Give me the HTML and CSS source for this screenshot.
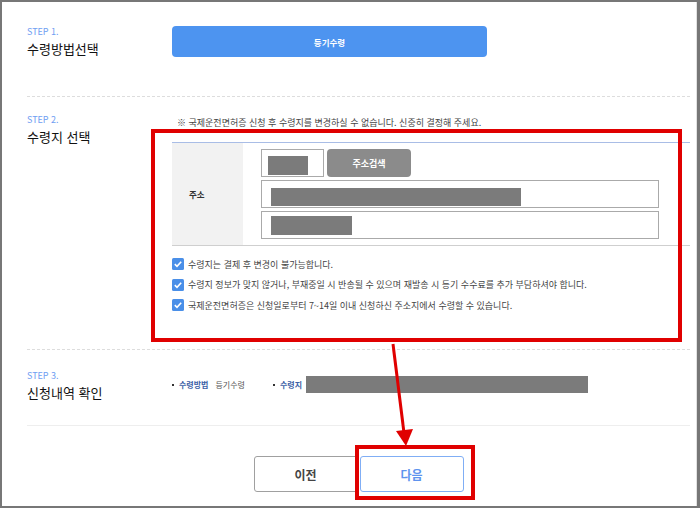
FILE: index.html
```html
<!DOCTYPE html>
<html lang="ko">
<head>
  <meta charset="utf-8">
  <title>수령지 선택</title>
  <link rel="stylesheet" href="styles.css">
</head>
<body>

  <div class="frame">
    <div class="page">

      <div class="step step1">
        <div class="step_head">
          <p class="step_no">STEP 1.</p>
          <h2 class="step_title">수령방법선택</h2>
        </div>
        <div class="step_body">
          <button class="btn_method">등기수령</button>
        </div>
      </div>

      <div class="step step2">
        <div class="step_head">
          <p class="step_no">STEP 2.</p>
          <h2 class="step_title">수령지 선택</h2>
        </div>
        <div class="step_body">
          <p class="notice">※ 국제운전면허증 신청 후 수령지를 변경하실 수 없습니다. 신중히 결정해 주세요.</p>

          <div class="addr_table">
            <div class="addr_label">주소</div>
            <div class="addr_fields">
              <div class="addr_row">
                <div class="field field_zip"><span class="mask mask_zip"></span></div>
                <button class="btn_search">주소검색</button>
              </div>
              <div class="field field_wide"><span class="mask mask_addr1"></span></div>
              <div class="field field_wide"><span class="mask mask_addr2"></span></div>
            </div>
          </div>

          <ul class="agree_list">
            <li>
              <svg class="check" width="12" height="12" viewBox="0 0 12 12"><rect width="12" height="12" rx="1.5" fill="#4a8fe8"/><path d="M2.8 6.1l2.2 2.2 4.2-4.6" fill="none" stroke="#fff" stroke-width="1.6"/></svg>
              수령지는 결제 후 변경이 불가능합니다.
            </li>
            <li>
              <svg class="check" width="12" height="12" viewBox="0 0 12 12"><rect width="12" height="12" rx="1.5" fill="#4a8fe8"/><path d="M2.8 6.1l2.2 2.2 4.2-4.6" fill="none" stroke="#fff" stroke-width="1.6"/></svg>
              수령지 정보가 맞지 않거나, 부재중일 시 반송될 수 있으며 재발송 시 등기 수수료를 추가 부담하셔야 합니다.
            </li>
            <li>
              <svg class="check" width="12" height="12" viewBox="0 0 12 12"><rect width="12" height="12" rx="1.5" fill="#4a8fe8"/><path d="M2.8 6.1l2.2 2.2 4.2-4.6" fill="none" stroke="#fff" stroke-width="1.6"/></svg>
              국제운전면허증은 신청일로부터 7~14일 이내 신청하신 주소지에서 수령할 수 있습니다.
            </li>
          </ul>
        </div>
      </div>

      <div class="step step3">
        <div class="step_head">
          <p class="step_no">STEP 3.</p>
          <h2 class="step_title">신청내역 확인</h2>
        </div>
        <div class="step_body summary">
          <span class="sum_item"><b>수령방법</b>등기수령</span>
          <span class="sum_item sum_addr"><b>수령지</b><span class="mask mask_sum"></span></span>
        </div>
      </div>

      <div class="btn_area">
        <button class="btn_prev">이전</button>
        <button class="btn_next">다음</button>
      </div>

    </div>

    <!-- red annotation marks -->
    <div class="mark mark_addr"></div>
    <div class="mark mark_next"></div>
    <svg class="mark_arrow" width="30" height="110" viewBox="0 0 30 110">
      <line x1="8" y1="4" x2="19" y2="93" stroke="#e00000" stroke-width="3"/>
      <polygon points="11,91 28,89 21,106" fill="#e00000"/>
    </svg>
  </div>

</body>
</html>
```

FILE: styles.css
```css
* {
  box-sizing: border-box;
}

html, body {
  margin: 0;
  padding: 0;
}

body {
  background: #fff;
  font-family: "Noto Sans CJK KR", "Noto Sans", sans-serif;
  color: #333;
}

.frame {
  position: relative;
  width: 700px;
  height: 508px;
  border: 2px solid #777;
  border-right-width: 3px;
  overflow: hidden;
  background: #fff;
}

.page {
  height: 100%;
  padding: 0 6px 0 25px;
  border-right: 1px solid #e2e2e2;
}

/* steps */
.step {
  display: flex;
}

.step_head {
  width: 145px;
  flex: none;
}

.step_body {
  flex: 1;
}

.step_no {
  margin: 0;
  font-size: 9px;
  line-height: 12px;
  color: #6f9ef2;
}

.step_title {
  margin: 2px 0 0;
  font-size: 13px;
  line-height: 18px;
  font-weight: normal;
  color: #111;
}

.step1 {
  padding: 24px 0 38px;
  border-bottom: 1px dashed #ddd;
}

.step2 {
  padding: 17px 0 38px;
  border-bottom: 1px dashed #ddd;
}

.step3 {
  padding: 20px 0 23px;
  border-bottom: 1px solid #eee;
}

.btn_method {
  display: block;
  width: 315px;
  height: 31px;
  border: 0;
  border-radius: 4px;
  background: #4d94f0;
  color: #fff;
  font-family: inherit;
  font-size: 8.5px;
  font-weight: bold;
}

/* address */
.notice {
  margin: 3px 0 13px;
  padding-left: 5px;
  font-size: 9px;
  line-height: 12px;
  color: #444;
}

.addr_table {
  display: flex;
  border-top: 1px solid #a9bde6;
  border-bottom: 1px solid #cfcfcf;
}

.addr_label {
  width: 71px;
  flex: none;
  display: flex;
  align-items: center;
  padding-left: 17px;
  background: #f2f2f2;
  font-size: 8.5px;
  font-weight: bold;
  color: #333;
}

.addr_fields {
  flex: 1;
  display: flex;
  flex-direction: column;
  gap: 3px;
  padding: 6px 0 6px 18px;
}

.addr_row {
  display: flex;
}

.field {
  height: 28px;
  border: 1px solid #aaa;
  background: #fff;
}

.field_zip {
  width: 63px;
  padding: 6px 0 0 6px;
}

.field_wide {
  width: 398px;
}

.mask {
  display: block;
  background: #7b7b7b;
}

.mask_zip {
  width: 40px;
  height: 19px;
}

.mask_addr1 {
  width: 250px;
  height: 18px;
  margin: 7px 0 0 9px;
}

.mask_addr2 {
  width: 81px;
  height: 19px;
  margin: 4px 0 0 9px;
}

.btn_search {
  width: 84px;
  height: 28px;
  margin-left: 3px;
  border: 0;
  border-radius: 4px;
  background: #8b8b8b;
  color: #fff;
  font-family: inherit;
  font-size: 9px;
  font-weight: bold;
}

.agree_list {
  list-style: none;
  margin: 12px 0 0;
  padding: 0;
  display: flex;
  flex-direction: column;
  gap: 8.5px;
}

.agree_list li {
  display: flex;
  align-items: center;
  height: 12px;
  font-size: 9px;
  color: #444;
}

.check {
  display: block;
  flex: none;
  margin-right: 4px;
}

/* summary */
.summary {
  display: flex;
  align-items: center;
  height: 23px;
  padding-top: 6px;
}

.sum_item {
  display: flex;
  align-items: center;
  font-size: 8px;
  color: #555;
}

.sum_item::before {
  content: "";
  width: 2px;
  height: 2px;
  margin-right: 5px;
  background: #333;
}

.sum_item b {
  margin-right: 7px;
  color: #3c5fa6;
}

.sum_addr {
  margin-left: 28px;
}

.sum_addr b {
  margin-right: 4px;
}

.mask_sum {
  width: 282px;
  height: 17px;
}

/* bottom buttons */
.btn_area {
  display: flex;
  justify-content: center;
  gap: 2px;
  padding-top: 30px;
}

.btn_prev,
.btn_next {
  width: 104px;
  height: 36px;
  border-radius: 3px;
  background: #fff;
  font-family: inherit;
  font-size: 12px;
  font-weight: bold;
}

.btn_prev {
  border: 1px solid #a0a0a0;
  color: #444;
}

.btn_next {
  border: 1px solid #80aef5;
  color: #5e93ee;
}

/* red annotation marks */
.mark {
  position: absolute;
  border: 4.5px solid #e00000;
}

.mark_addr {
  left: 149px;
  top: 127px;
  width: 531px;
  height: 213px;
}

.mark_next {
  left: 353px;
  top: 443px;
  width: 120px;
  height: 55px;
  border-width: 4px;
}

.mark_arrow {
  position: absolute;
  left: 383px;
  top: 338px;
}
```
